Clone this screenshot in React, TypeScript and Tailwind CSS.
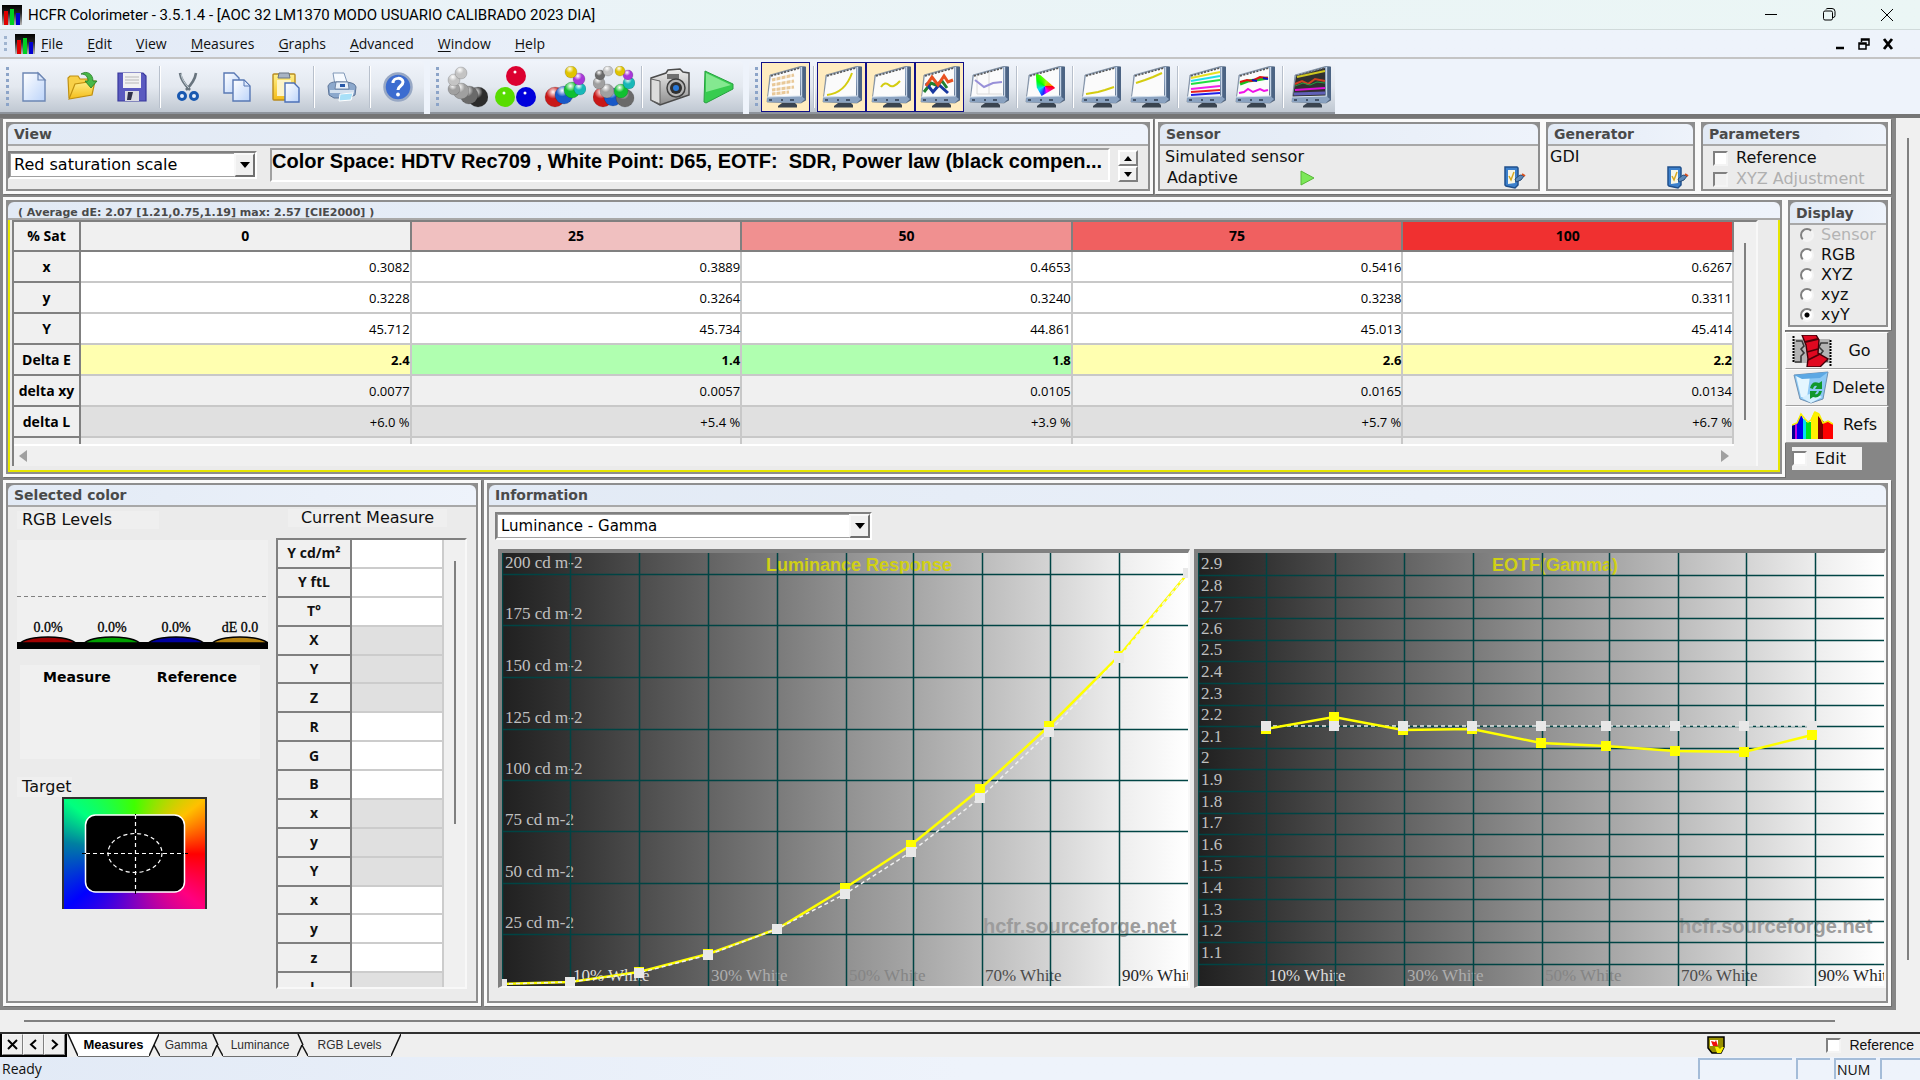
import type { ReactNode } from "react";

/* =========================================================
   DATA
========================================================== */

const MENUS = ["File", "Edit", "View", "Measures", "Graphs", "Advanced", "Window", "Help"];

const TABS = [
  { name: "Measures", width: "w-[71px]" },
  { name: "Gamma", width: "w-[52px]" },
  { name: "Luminance", width: "w-[74px]" },
  { name: "RGB Levels", width: "w-[83px]" },
];

const SATURATIONS = [
  { label: "0", bg: "bg-[#f0f0f0]" },
  { label: "25", bg: "bg-[#f0c0c0]" },
  { label: "50", bg: "bg-[#f09090]" },
  { label: "75", bg: "bg-[#f06060]" },
  { label: "100", bg: "bg-[#f03030]" },
];

const YELLOW = "bg-[#ffffb0] font-bold";
const GREEN = "bg-[#b0ffb0] font-bold";

const MEASURES: { label: string; values: string[]; bg: string[] }[] = [
  { label: "x", values: ["0.3082", "0.3889", "0.4653", "0.5416", "0.6267"], bg: [] },
  { label: "y", values: ["0.3228", "0.3264", "0.3240", "0.3238", "0.3311"], bg: [] },
  { label: "Y", values: ["45.712", "45.734", "44.861", "45.013", "45.414"], bg: [] },
  {
    label: "Delta E",
    values: ["2.4", "1.4", "1.8", "2.6", "2.2"],
    bg: [YELLOW, GREEN, GREEN, YELLOW, YELLOW],
  },
  {
    label: "delta xy",
    values: ["0.0077", "0.0057", "0.0105", "0.0165", "0.0134"],
    bg: Array(5).fill("bg-[#f0f0f0]"),
  },
  {
    label: "delta L",
    values: ["+6.0 %", "+5.4 %", "+3.9 %", "+5.7 %", "+6.7 %"],
    bg: Array(5).fill("bg-[#e0e0e0]"),
  },
];

const CURRENT_ROWS = [
  "Y cd/m²", "Y ftL", "T°", "X", "Y", "Z", "R", "G",
  "B", "x", "y", "Y", "x", "y", "z", "L",
];

const GRID_X = [0, 68, 137, 206, 275, 344, 411, 480, 548, 617, 686];

const WHITE_LABELS = [
  { x: 71, text: "10% White", fill: "#dcdcdc" },
  { x: 209, text: "30% White", fill: "#adadad" },
  { x: 347, text: "50% White", fill: "#858585" },
  { x: 483, text: "70% White", fill: "#4c4c4c" },
  { x: 620, text: "90% White", fill: "#262626" },
];

/* =========================================================
   PANELS
========================================================== */

function Panel({
  title,
  className = "",
  bodyClass = "",
  headClass = "h-[22px] text-[14px]",
  children,
}: {
  title: string;
  className?: string;
  bodyClass?: string;
  headClass?: string;
  children: ReactNode;
}) {
  return (
    <section className={`flex flex-col bg-[#fafafa] p-[3px] shadow-[1px_1px_0_#707070] ${className}`}>
      <div className="flex flex-1 flex-col border-2 border-[#8e8e8e] bg-[#8e8e8e]">
        <h2
          className={`flex shrink-0 items-center overflow-hidden whitespace-nowrap rounded-t-md border-b-2 border-[#a8a8a8] bg-linear-to-r from-[#e2eaf5] to-[#eef3fb] pl-1.5 font-bold text-[#4a4a4a] ${headClass}`}
        >
          {title}
        </h2>
        <div className={`flex-1 bg-[#ebebeb] ${bodyClass}`}>{children}</div>
      </div>
    </section>
  );
}

function Select({ value, label, className }: { value: string; label: string; className: string }) {
  return (
    <div className={`relative h-7 border-2 border-[#808080] border-r-white border-b-white ${className}`}>
      <select
        aria-label={label}
        className="h-full w-full appearance-none border border-[#a0a0a0] bg-white pl-[3px] leading-5 text-black outline-none"
      >
        <option>{value}</option>
      </select>
      <span className="pointer-events-none absolute inset-y-0 right-0 flex w-[21px] items-center justify-center border-2 border-[#f8f8f8] border-r-[#707070] border-b-[#707070] bg-[#f0f0f0]">
        <svg width="10" height="6" viewBox="0 0 10 6"><path d="M0 0h10L5 6z" /></svg>
      </span>
    </div>
  );
}

const CHECKBOX =
  "size-[15px] shrink-0 appearance-none border-2 border-[#808080] border-r-[#f4f4f4] border-b-[#f4f4f4] bg-white disabled:bg-[#f0f0f0]";

/* =========================================================
   ICONS
========================================================== */

function AppIcon({ size }: { size: number }) {
  return (
    <svg width={size} height={size} viewBox="0 0 20 20">
      <defs>
        <linearGradient id="app" x1="0" y1="0" x2="0" y2="1">
          <stop offset="0" stopColor="#000" />
          <stop offset="0.4" stopColor="#222" />
          <stop offset="1" stopColor="#bbb" />
        </linearGradient>
      </defs>
      <rect width="20" height="20" fill="url(#app)" />
      <rect x="2" y="6" width="4" height="14" fill="#e00000" />
      <rect x="8" y="4" width="4" height="16" fill="#00d020" />
      <rect x="14" y="8" width="4" height="12" fill="#0000d0" />
    </svg>
  );
}

function SharedDefs() {
  const balls: [string, string][] = [
    ["white", "#c4c4c4"], ["silver", "#a0a0a0"], ["gray", "#6a6a6a"], ["dark", "#2c2c2c"],
    ["red", "#c81818"], ["blue", "#1858c8"], ["green", "#10c030"], ["cyan", "#18b8b8"],
    ["violet", "#a838d8"], ["yellow", "#e0c400"],
  ];
  return (
    <svg width="0" height="0" className="absolute" aria-hidden="true">
      <defs>
        {balls.map(([id, color]) => (
          <radialGradient key={id} id={`b-${id}`} cx="0.4" cy="0.25" r="0.75">
            <stop offset="0" stopColor="#fff" />
            <stop offset="0.45" stopColor={color} />
            <stop offset="1" stopColor={color} />
          </radialGradient>
        ))}
        <linearGradient id="bezel" x1="0" y1="0" x2="1" y2="1">
          <stop offset="0" stopColor="#b8c8dc" />
          <stop offset="0.6" stopColor="#7890b0" />
          <stop offset="1" stopColor="#34465c" />
        </linearGradient>
        <linearGradient id="page" x1="0" y1="0" x2="1" y2="1">
          <stop offset="0" stopColor="#fff" />
          <stop offset="1" stopColor="#bcd4fa" />
        </linearGradient>
        <linearGradient id="folder" x1="0" y1="0" x2="0" y2="1">
          <stop offset="0" stopColor="#fff08a" />
          <stop offset="1" stopColor="#f4bc18" />
        </linearGradient>
        <linearGradient id="body" x1="0" y1="0" x2="0" y2="1">
          <stop offset="0" stopColor="#f0f0f0" />
          <stop offset="1" stopColor="#8c8c8c" />
        </linearGradient>
      </defs>
    </svg>
  );
}

function Balls({ items }: { items: [number, number, number, string][] }) {
  return (
    <svg width="42" height="42" viewBox="0 0 42 42">
      {items.map(([x, y, r, c], i) => (
        <circle key={i} cx={x} cy={y} r={r} fill={`url(#b-${c})`} stroke="#00000040" strokeWidth="0.6" />
      ))}
    </svg>
  );
}

function Monitor({ dark, children }: { dark?: boolean; children: ReactNode }) {
  return (
    <svg width="40" height="42" viewBox="0 0 40 42">
      <path d="M4 9 36 0l4 1v33l-5 3-34-1z" fill="url(#bezel)" stroke="#5c6c80" strokeWidth="0.6" />
      <path d="M5 10 34 2v28L2 31z" fill={dark ? "#303030" : "#fbfbfb"} />
      <path d="M5 10 34 2" stroke="#555" strokeWidth="1.6" strokeDasharray="2 1.4" fill="none" />
      <path d="M36 1 40 1v33l-4 1z" fill="#4c6484" />
      <path d="M35.500 1v31" stroke="#c8d6e8" strokeWidth="1.400" />
      <path d="M1 31 35 30l4 3-4 4-34-1z" fill="#8aa2c0" />
      <path d="M1 31 35 30" stroke="#d8e4f0" />
      <path d="M3 34h3M15 34h2M24 34h4" stroke="#2c3a4c" strokeWidth="1.6" />
      <path d="M16 37h13l2 2v2.500H12V40z" fill="#3a4450" />
      {children}
    </svg>
  );
}

const stroke = (color: string, d: string, width = 2) => (
  <path d={d} fill="none" stroke={color} strokeWidth={width} />
);

const FILE_ICONS: Record<string, ReactNode> = {
  New: (
    <svg width="26" height="32" viewBox="0 0 26 32">
      <path d="M2 2h15l7 7v21H2z" fill="url(#page)" stroke="#6c86b4" strokeWidth="1.4" />
      <path d="M17 2v7h7z" fill="#dce8fc" stroke="#6c86b4" strokeWidth="1.2" />
    </svg>
  ),
  Open: (
    <svg width="34" height="32" viewBox="0 0 34 32">
      <path d="M3 27 2 7l2-2h8l2 3h10v6" fill="#f8d048" stroke="#c09010" strokeWidth="1.2" />
      <path d="M3 28 9 13l20-3-3 14z" fill="url(#folder)" stroke="#c09010" strokeWidth="1.200" />
      <path d="M15 3c6-4 12 0 12 7h4l-6 7-6-7h3c0-4-2-7-7-7z" fill="#48b848" stroke="#207820" strokeWidth="0.8" />
    </svg>
  ),
  Save: (
    <svg width="30" height="30" viewBox="0 0 30 30">
      <path d="M1 1h25l3 3v25H1z" fill="#5a5ac0" stroke="#38389c" strokeWidth="1.2" />
      <rect x="6" y="1" width="18" height="15" fill="#f2f2f2" />
      <path d="M8 5h14M8 8h14M8 11h14" stroke="#b8b8b8" />
      <rect x="8" y="19" width="14" height="10" fill="#dcdce4" />
      <path d="M11 20h5l-2 8h-4z" fill="#30304c" />
    </svg>
  ),
  Cut: (
    <svg width="26" height="32" viewBox="0 0 26 32">
      <path d="M5 2c1 7 5 12 10 17M21 2c-1 7-5 12-10 17" fill="none" stroke="#68747e" strokeWidth="2.6" />
      <path d="M6 3c1 6 4 10 8 14" fill="none" stroke="#c4d0d8" />
      <circle cx="7" cy="25" r="3.500" fill="#e4eefc" stroke="#1858b0" strokeWidth="3" />
      <circle cx="19" cy="25" r="3.500" fill="#e4eefc" stroke="#1858b0" strokeWidth="3" />
    </svg>
  ),
  Copy: (
    <svg width="30" height="32" viewBox="0 0 30 32">
      <path d="M2 2h10l5 5v15H2z" fill="url(#page)" stroke="#5878b4" strokeWidth="1.400" />
      <path d="M11 9h11l6 6v15H11z" fill="url(#page)" stroke="#5878b4" strokeWidth="1.400" />
      <path d="M22 9v6h6z" fill="#dce8fc" stroke="#5878b4" />
    </svg>
  ),
  Paste: (
    <svg width="28" height="32" viewBox="0 0 28 32">
      <rect x="1" y="3" width="22" height="26" rx="1" fill="url(#folder)" stroke="#b88c20" strokeWidth="1.400" />
      <path d="M7 2h10l1 5H6z" fill="#a8b4c4" stroke="#687484" />
      <path d="M5 9h14v16H5z" fill="#fdf4c8" />
      <path d="M13 12h9l5 5v14H13z" fill="url(#page)" stroke="#4c70b8" strokeWidth="1.400" />
    </svg>
  ),
  Print: (
    <svg width="30" height="30" viewBox="0 0 30 30">
      <path d="M6 1h11l4 12H8z" fill="#f6faff" stroke="#8098b8" />
      <path d="M1 14c2-5 8-4 13-4s14 0 15 5l-1 8-6 3H7l-5-3z" fill="#8ca8cc" stroke="#5c7498" />
      <path d="M9 10h12l1 7H8z" fill="#e8f0fa" stroke="#5c7498" strokeWidth="0.8" />
      <path d="M13 12h5v3h-5z" fill="#2858a8" />
      <path d="M3 18h24v3H3z" fill="#d4e0ee" />
      <path d="m13 22 13-1-2 7-12 1z" fill="#a8e0f8" stroke="#fff" />
    </svg>
  ),
  Help: (
    <svg width="30" height="32" viewBox="0 0 30 32">
      <circle cx="15" cy="16" r="13.500" fill="#3c6cd0" stroke="#98a8c4" strokeWidth="2.500" />
      <path d="M10 12c0-6 10-6 10-1 0 4-5 4-5 8" fill="none" stroke="#fff" strokeWidth="3" />
      <circle cx="15" cy="23.500" r="1.900" fill="#fff" />
    </svg>
  ),
};

const MEASURE_ICONS: Record<string, ReactNode> = {
  Grayscale: (
    <Balls
      items={[
        [32, 31, 10, "dark"], [23, 29, 9, "gray"], [15, 25, 8, "silver"], [8, 23, 6, "silver"],
        [8, 14, 6, "white"], [15, 7, 6, "white"],
      ]}
    />
  ),
  Primaries: (
    <svg width="42" height="42" viewBox="0 0 42 42">
      <circle cx="21" cy="10" r="10" fill="#dc0030" />
      <circle cx="10" cy="31" r="10" fill="#58dc00" />
      <circle cx="31" cy="31" r="10" fill="#0000dc" />
      <circle cx="20" cy="6" r="1.500" fill="#fff" />
      <circle cx="9" cy="27" r="1.500" fill="#fff" />
      <circle cx="30" cy="27" r="1.500" fill="#fff" />
    </svg>
  ),
  Secondaries: (
    <Balls
      items={[
        [11, 31, 10, "red"], [20, 29, 9, "blue"], [28, 24, 8, "green"], [36, 23, 6, "cyan"],
        [35, 13, 6, "violet"], [27, 6, 6, "yellow"],
      ]}
    />
  ),
  "Full scale": (
    <Balls
      items={[
        [10, 31, 10, "red"], [20, 31, 9, "blue"], [32, 32, 9, "gray"], [14, 25, 7, "silver"],
        [28, 25, 7, "green"], [6, 17, 6, "silver"], [36, 17, 6, "cyan"], [7, 9, 5, "gray"],
        [35, 9, 5, "violet"], [15, 5, 5, "white"], [27, 5, 5, "yellow"],
      ]}
    />
  ),
  Camera: (
    <svg width="42" height="38" viewBox="0 0 42 38">
      <path d="M2 10 17 5l2-3 12-1 3 3 6 1v22l-6 2-23 8-9-5z" fill="url(#body)" stroke="#4c4c4c" strokeWidth="1.500" />
      <path d="M2 11 11 13v23l-9-4z" fill="#dcdcdc" stroke="#606060" />
      <path d="M18 6h12v5H18z" fill="#707070" />
      <circle cx="27" cy="20" r="9" fill="#b4b4b4" stroke="#404040" strokeWidth="1.500" />
      <circle cx="27" cy="20" r="6" fill="#303030" />
      <circle cx="27" cy="20" r="3" fill="#2878d8" />
    </svg>
  ),
  Start: (
    <svg width="32" height="34" viewBox="0 0 32 34">
      <path d="M2 1 30 14v5L3 33 1 32z" fill="#38cc50" stroke="#28a040" />
      <path d="M3 3 28 15 3 22z" fill="#84e890" />
    </svg>
  ),
};

const VIEW_GROUPS: { on?: boolean; name: string; icon: ReactNode }[][] = [
  [
    {
      on: true,
      name: "Measures",
      icon: (
        <Monitor>
          {stroke("#e8c898", "m6 14 22-5M6 19l22-4M6 24l22-3M6 28l17-2", 3)}
          {stroke("#fff", "M10 11v18M15 10v18M20 8v20M25 7v20", 1)}
        </Monitor>
      ),
    },
  ],
  [
    { on: true, name: "Luminance", icon: <Monitor>{stroke("#d4cc10", "M5 29q18-2 25-22")}</Monitor> },
    { on: true, name: "Gamma", icon: <Monitor>{stroke("#d4cc10", "M10 21q4-6 8-2t11-4")}</Monitor> },
    {
      on: true,
      name: "RGB levels",
      icon: (
        <Monitor>
          {stroke("#208030", "m4 26 7-9 5 2 6-4 5 7", 3)}
          {stroke("#1838a0", "m6 17 7 9 6-7 9 8", 3)}
          {stroke("#e85020", "m6 20 6-9 6 8 6-9 4 6 5-2", 3)}
        </Monitor>
      ),
    },
    {
      name: "Color temperature",
      icon: (
        <Monitor>
          {stroke("#d8d8d8", "M8 10v18h25M20 6v22", 1)}
          {stroke("#9890d8", "m6 14 9 7 9-4 9-1")}
        </Monitor>
      ),
    },
  ],
  [
    {
      name: "CIE diagram",
      icon: (
        <Monitor>
          <foreignObject x="10" y="7" width="22" height="24">
            <div className="h-full w-full bg-[conic-gradient(from_90deg_at_45%_55%,#ff0000,#ff00ff_20%,#2020ff_28%,#00e0ff_42%,#00ff00_60%,#a0ff00_80%,#ff8000)] [clip-path:polygon(4%_4%,24%_8%,92%_62%,30%_96%,8%_60%)]" />
          </foreignObject>
        </Monitor>
      ),
    },
  ],
  [
    { name: "Near black", icon: <Monitor>{stroke("#d4cc10", "m5 28 12-2 7-2 9-3")}</Monitor> },
    { name: "Near white", icon: <Monitor>{stroke("#d4cc10", "m6 17 9-3 8-3 9-4")}</Monitor> },
  ],
  [
    {
      name: "Saturation",
      icon: (
        <Monitor>
          {stroke("#e8e020", "m5 12 29-6")}
          {stroke("#20e0e8", "m5 15 29-5")}
          {stroke("#20e040", "m5 18 29-4")}
          {stroke("#f020e8", "m5 23 29-3")}
          {stroke("#e82020", "m5 26 29-2")}
          {stroke("#2020e8", "m5 29 29-2")}
        </Monitor>
      ),
    },
    {
      name: "Combined",
      icon: (
        <Monitor>
          {stroke("#18c020", "m5 18 8-3 8-1 12-2", 3)}
          {stroke("#e01010", "m5 16 7-2 5 1 8-4 8 1")}
          {stroke("#1010c0", "M17 14l5 1M28 12l5 1")}
          {stroke("#f010e8", "m4 27 5-1 4-3 5 3 7-3 4 2 4-1")}
        </Monitor>
      ),
    },
  ],
  [
    {
      name: "Overview",
      icon: (
        <Monitor dark>
          {stroke("#d0c820", "m6 11 28-6")}
          {stroke("#d04020", "m4 18 7-3 6 3 7-5 10 2")}
          {stroke("#20a040", "m4 20 8-3 7 2 7-3 8 1", 1)}
          {stroke("#e010d8", "m4 24 30-2")}
          {stroke("#6060b8", "m3 28 31-1", 3)}
        </Monitor>
      ),
    },
  ],
];

function ToolButton({ name, on, children }: { name: string; on?: boolean; children: ReactNode }) {
  return (
    <button
      type="button"
      aria-label={name}
      className={`flex h-[50px] w-[49px] items-center justify-center ${on ? "border border-[#101088] bg-[#ffecc0]" : ""}`}
    >
      {children}
    </button>
  );
}

const Separator = () => (
  <span className="flex h-[42px] w-[7px] justify-center">
    <i className="w-0.5 border-l border-[#b8c0cc] bg-white" />
  </span>
);

const TOOLBAR =
  "flex h-[53px] items-center rounded-t border-b-2 border-[#8e949c] bg-linear-to-b from-[#f0f4fb] via-[#e4e9f0] via-50% to-[#c0c8d2]";

const Grip = () => (
  <span className="mr-[3px] ml-1.5 h-10 w-[3px] bg-[repeating-linear-gradient(#8ca4c8_0_3px,transparent_3px_6px)]" />
);

function SheetIcon() {
  return (
    <svg width="24" height="24" viewBox="0 0 24 24">
      <path d="M3 2h12l1 1v17l-3 3-9-2-1-1z" fill="#3c80cc" stroke="#20508c" strokeWidth="1.500" />
      <path d="M6 5h7v13l-7 1z" fill="#f6f6e8" />
      <path d="m7 11 2 4 3-8" fill="none" stroke="#d8a820" strokeWidth="1.500" />
      <path d="m13 14 5-4 4 1-3 4-5 2z" fill="#5c88b8" stroke="#284c78" />
      <path d="m20 9 3 2" stroke="#d85020" strokeWidth="2" />
    </svg>
  );
}

/* =========================================================
   CHARTS
========================================================== */

function ChartFrame({
  id,
  title,
  titleX,
  gridY,
  labels,
  children,
}: {
  id: string;
  title: string;
  titleX: number;
  gridY: number[];
  labels: string[];
  children: ReactNode;
}) {
  const stops = ["#202020", "#343434", "#4c4c4c", "#636363", "#7a7a7a", "#919191", "#a6a6a6", "#bcbcbc", "#d4d4d4", "#ededed", "#ffffff"];
  return (
    <div className="min-w-0 flex-1 border-t-4 border-r-2 border-b-2 border-l-4 border-[#808080] border-r-[#f8f8f8] border-b-[#f8f8f8]">
      <svg viewBox="0 0 686 433" className="block w-full" role="img" aria-label={title}>
        <defs>
          <linearGradient id={id}>
            {stops.map((c, i) => (
              <stop key={c} offset={i / 10} stopColor={c} />
            ))}
          </linearGradient>
        </defs>
        <rect width="686" height="433" fill={`url(#${id})`} />

        <g fontFamily="'Liberation Sans', Arial, sans-serif" fontWeight="bold">
          <text x="481" y="380" fontSize="20" fill="#9c9c9c">hcfr.sourceforge.net</text>
          <text x={titleX} y="18" fontSize="18" fill="#d0d014">{title}</text>
        </g>

        <g fontFamily="'Liberation Serif', 'Times New Roman', serif" fontSize="17">
          {labels.map((text, i) => (
            <text key={text} x="3" y={gridY[i] - 6} fill="#c0c0c0">{text}</text>
          ))}
          {WHITE_LABELS.map((l) => (
            <text key={l.text} x={l.x} y="428" fill={l.fill}>{l.text}</text>
          ))}
        </g>

        <g stroke="#004444" strokeWidth="1.500">
          {GRID_X.slice(0, 10).map((x) => (
            <path key={x} d={`M${x + 0.5} 0V433`} />
          ))}
          {gridY.map((y) => (
            <path key={y} d={`M0 ${y + 0.5}H686`} />
          ))}
        </g>

        {children}
      </svg>
    </div>
  );
}

function Series({ points, color, line }: { points: number[][]; color: string; line: ReactNode }) {
  return (
    <>
      {line}
      {points.map(([x, y]) => (
        <rect key={x} x={x - 5} y={y - 5} width="10" height="10" fill={color} />
      ))}
    </>
  );
}

const toPath = (points: number[][]) => points.map((p) => p.join(",")).join(" ");

const LUM = [[0, 431], [68, 429], [137, 419], [206, 401], [275, 376], [343, 335], [409, 292], [478, 236], [547, 173], [617, 103], [686, 20]];
const LUM_REF = [[0, 431], [68, 429], [137, 420], [206, 402], [275, 376], [343, 341], [409, 299], [478, 245], [547, 179], [617, 105], [686, 20]];
const GAM = [[68, 176], [136, 164], [205, 177], [274, 176], [343, 190], [408, 193], [477, 198], [546, 199], [614, 182]];
const GAM_REF = [[68, 173], [136, 173], [205, 173], [274, 173], [343, 173], [408, 173], [477, 173], [546, 173], [614, 173]];

function Line({ points }: { points: number[][] }) {
  return <polyline points={toPath(points)} fill="none" stroke="#ffff00" strokeWidth="2.500" />;
}

function RefLine({ points }: { points: number[][] }) {
  return <polyline points={toPath(points)} fill="none" stroke="#f0f0f0" strokeWidth="1.500" strokeDasharray="4 3" />;
}

/* =========================================================
   SELECTED COLOR
========================================================== */

function RgbLevels() {
  const bars = [
    { x: 31, fill: "#a00000", text: "0.0%" },
    { x: 95, fill: "#00a000", text: "0.0%" },
    { x: 159, fill: "#0000a0", text: "0.0%" },
    { x: 223, fill: "#b88410", text: "dE 0.0" },
  ];
  return (
    <svg width="251" height="109" viewBox="0 0 251 109" className="mt-[11px] block bg-[#f0f0f0]">
      <path d="M0 56.500h251" stroke="#808080" strokeDasharray="4 3" />
      <rect y="102" width="251" height="7" />
      {bars.map((b) => (
        <g key={b.x}>
          <path d={`M${b.x - 28} 103q6-4 14-5q14-2 28 0q8 1 14 5z`} fill={b.fill} stroke="#000" strokeWidth="1.500" />
          <text x={b.x} y="92" textAnchor="middle" fontFamily="'Liberation Serif', serif" fontSize="14" stroke="#000" strokeWidth="0.3">
            {b.text}
          </text>
        </g>
      ))}
    </svg>
  );
}

function Target() {
  return (
    <div className="ml-[45px] h-[112px] w-[145px] border-2 border-b-0 border-[#303030] bg-[conic-gradient(#40ff00,#ffc000_52deg,#ff0000_90deg,#ff0080_128deg,#8000c0_180deg,#0000ff_232deg,#0080a0_280deg,#00ff80_308deg,#40ff00)]">
      <svg viewBox="0 0 141 110" className="block w-full">
        <rect x="21.500" y="16" width="99" height="77" rx="10" fill="#000" stroke="#fff" strokeWidth="1.500" />
        <path d="M18 54.500h106M71.500 15v80" stroke="#000" />
        <g fill="none" stroke="#fff" strokeWidth="1.200" strokeDasharray="4 3">
          <path d="M22 54.500h99M71.500 16v77" />
          <ellipse cx="71" cy="54" rx="27" ry="19.500" />
        </g>
      </svg>
    </div>
  );
}

function CurrentMeasure() {
  return (
    <div className="flex flex-col">
      <h3 className="ml-3 w-[159px] bg-[#efefef] text-center leading-[18px]">Current Measure</h3>
      <div className="mt-[11px] flex h-[451px] w-[191px] overflow-hidden border-2 border-[#808080] border-r-[#f8f8f8] border-b-[#f8f8f8] bg-[#f0f0f0]">
        <table className="h-[462px] w-[166px] table-fixed border-separate border-spacing-0 font-['Open_Sans',sans-serif] text-[14px]">
          <tbody>
            {CURRENT_ROWS.map((row, i) => (
              <tr key={i}>
                <th className="w-[74px] border-r-2 border-b-2 border-[#808080] bg-[#f0f0f0] p-0 leading-5">{row}</th>
                <td
                  className={`border-r-2 border-b-2 border-[#cccccc] p-0 ${Math.floor(i / 3) % 2 ? "bg-[#e0e0e0]" : "bg-white"}`}
                />
              </tr>
            ))}
          </tbody>
        </table>
        <div className="mt-[21px] ml-2.5 h-[263px] w-0.5 bg-[#808080]" />
      </div>
    </div>
  );
}

/* =========================================================
   ACTIONS
========================================================== */

const ACTIONS: { name: string; icon: ReactNode }[] = [
  {
    name: "Go",
    icon: (
      <svg width="40" height="32" viewBox="0 0 40 32">
        <path d="M2 4h36v24H2z" fill="#b4b4b4" />
        <path d="M1.500 1v27M38.500 5v27" stroke="#000" strokeWidth="2" strokeDasharray="2 1" />
        <path d="M4 6h6l2 5-3 3 3 4-3 3v6H3M36 8h-7l-2 4 4 4-3 4 4 6h4" fill="none" stroke="#383838" strokeWidth="1.600" />
        <path d="M10 0h14l3 5-1 13 10 6-8 8H15l1-8-2-14z" fill="#e00820" stroke="#400008" strokeWidth="1.400" />
        <path d="m13 7 13-3M15 17l11-3M16 25l12-6" stroke="#500008" strokeWidth="1.800" />
      </svg>
    ),
  },
  {
    name: "Delete",
    icon: (
      <svg width="38" height="33" viewBox="0 0 38 33">
        <path d="M2 4 36 1l-5 27-12 4-11-4z" fill="#8cc8f4" stroke="#7090b0" />
        <path d="M4 5h14l-3 22-6-1z" fill="#e4f6ff" />
        <path d="M2 4 36 1l-8 6-18 1z" fill="#5ca8e4" />
        <path d="M10 27q10-8 20-1l-11 6z" fill="#d4f0ff" />
        <path d="M18 17q2-8 9-5l3-2v8h-7l2-3q-3-1-4 3zM30 20q-2 8-9 6l-3 2v-8h7l-2 3q3 1 4-3z" fill="#10982c" />
      </svg>
    ),
  },
  {
    name: "Refs",
    icon: (
      <svg width="41" height="28" viewBox="0 0 41 28">
        <path d="M0 14h3v14H0z" fill="#000090" />
        <path d="M3 12h3v16H3z" fill="#c000e0" />
        <path d="M5 11 9 3l3 7v18H5z" fill="#0000f0" />
        <path d="M11 8h3v20h-3z" fill="#00e0f0" />
        <path d="M14 11h6v17h-6z" fill="#00e020" />
        <path d="m19 8 3-7 5 1v26h-8z" fill="#fff000" />
        <path d="m26 5 6 6v17h-6z" fill="#780000" />
        <path d="m31 12 6-2 4 3v15H31z" fill="#ff0000" />
        <path d="m0 14 5-2 4-9 4 5 3 3 3-2 4-8 4 2 4 9 5-2 5 3" fill="none" stroke="#f8f000" strokeWidth="1.500" />
      </svg>
    ),
  },
];

/* =========================================================
   WINDOW
========================================================== */

export default function App() {
  return (
    <div className="flex min-h-screen flex-col bg-[#efefef] font-['DejaVu_Sans',sans-serif] text-[16px] leading-5 text-[#101010]">
      <SharedDefs />

      {/* Title bar */}
      <header className="flex h-[30px] items-center border-b border-[#d0dada] bg-linear-to-r from-[#eaf2f8] to-[#ebf6f5] pl-0.5 text-black">
        <AppIcon size={20} />
        <h1 className="flex-1 pl-1.5 font-[Roboto,sans-serif] text-[15px]">
          HCFR Colorimeter - 3.5.1.4 - [AOC 32 LM1370 MODO USUARIO CALIBRADO 2023 DIA]
        </h1>
        <div className="flex items-center">
          <button type="button" aria-label="Minimize" className="flex h-7 w-[58px] items-center justify-center">
            <svg width="12" height="12" viewBox="0 0 12 12"><path d="M0 5.500h12" stroke="#000" /></svg>
          </button>
          <button type="button" aria-label="Restore" className="flex h-7 w-[58px] items-center justify-center">
            <svg width="13" height="13" viewBox="0 0 13 13" fill="none" stroke="#000">
              <rect x="0.500" y="3" width="9" height="9" rx="1.500" />
              <path d="M3 1.500Q3 .5 5 .5h4q3 0 3 3v4q0 2-2 2" />
            </svg>
          </button>
          <button type="button" aria-label="Close" className="mr-1 flex h-7 w-[58px] items-center justify-center">
            <svg width="12" height="12" viewBox="0 0 12 12"><path d="m0 0 12 12M12 0 0 12" stroke="#000" /></svg>
          </button>
        </div>
      </header>

      {/* Menu bar */}
      <nav className="flex h-[29px] items-center border-b-2 border-[#c4c4c4] bg-linear-to-r from-[#e2eaf6] to-[#eef3fb] to-50% pl-1 font-['Open_Sans',sans-serif] text-[14px]">
        <span className="mr-2 h-4 w-[3px] bg-[repeating-linear-gradient(#a0b4d0_0_3px,transparent_3px_6px)]" />
        <AppIcon size={20} />
        <div className="flex flex-1 gap-6 pl-1.5">
          {MENUS.map((m) => (
            <button key={m} type="button">
              <u className="underline-offset-2">{m[0]}</u>
              {m.slice(1)}
            </button>
          ))}
        </div>
        <div className="flex gap-3 pr-[26px]">
          <button type="button" aria-label="Minimize document">
            <svg width="12" height="12" viewBox="0 0 12 12"><path d="M2 10h8" stroke="#000" strokeWidth="2.500" /></svg>
          </button>
          <button type="button" aria-label="Restore document">
            <svg width="12" height="12" viewBox="0 0 12 12" fill="none" stroke="#000" strokeWidth="1.500">
              <path d="M3.500 4V1H11v6H8M1 5h7v6H1zM1 6h7M4 2h7" />
            </svg>
          </button>
          <button type="button" aria-label="Close document">
            <svg width="12" height="12" viewBox="0 0 12 12"><path d="m2 1 8 10M10 1 2 11" stroke="#000" strokeWidth="2.800" /></svg>
          </button>
        </div>
      </nav>

      {/* Toolbars */}
      <div className="flex gap-1.5 bg-[#eef3fb] pt-0.5">
        <div className={`pr-0.5 ${TOOLBAR}`}>
          <span className="ml-1.5 h-10 w-[3px] bg-[repeating-linear-gradient(#8ca4c8_0_3px,transparent_3px_6px)]" />
          {Object.entries(FILE_ICONS).map(([name, icon]) => (
            <div key={name} className="flex items-center">
              {(name === "Cut" || name === "Print" || name === "Help") && <Separator />}
              <ToolButton name={name}>{icon}</ToolButton>
            </div>
          ))}
        </div>
        <div className={TOOLBAR}>
          <Grip />
          {Object.entries(MEASURE_ICONS).map(([name, icon]) => (
            <div key={name} className="flex items-center">
              {name === "Camera" && <Separator />}
              <ToolButton name={name}>{icon}</ToolButton>
            </div>
          ))}
        </div>
        <div className={TOOLBAR}>
          <Grip />
          {VIEW_GROUPS.map((group, i) => (
            <div key={i} className="flex items-center">
              {i > 0 && <Separator />}
              {group.map((b) => (
                <ToolButton key={b.name} name={b.name} on={b.on}>{b.icon}</ToolButton>
              ))}
            </div>
          ))}
        </div>
      </div>

      {/* Document area */}
      <div className="flex flex-1 border-t-4 border-[#757575]">
        <main className="flex min-w-0 flex-1 flex-col gap-[3px] bg-[#868686] pt-px pr-[5px] pb-1 pl-[3px]">
          <div className="flex">
            <Panel title="View" className="mr-0.5 min-w-0 flex-1" bodyClass="flex h-[46px] pt-0.5">
              <Select value="Red saturation scale" label="Measure type" className="mt-[3px] w-[249px]" />
              <p className="mr-2 ml-[13px] h-[34px] min-w-0 flex-1 truncate border-2 border-[#a0a0a0] border-r-white border-b-white bg-[#f0f0f0] font-['Liberation_Sans',Arial,sans-serif] text-[20px] leading-[22px] font-bold whitespace-pre text-black">
                Color Space: HDTV Rec709 , White Point: D65, EOTF:  SDR, Power law (black compen...
              </p>
              <div className="mt-0.5 mr-2.5 flex w-5 flex-col">
                {["Previous", "Next"].map((n) => (
                  <button
                    key={n}
                    type="button"
                    aria-label={n}
                    className="flex h-4 items-center justify-center border-2 border-white border-r-[#808080] border-b-[#808080] bg-[#f0f0f0]"
                  >
                    <svg width="8" height="5" viewBox="0 0 8 5"><path d={n === "Next" ? "M0 0h8L4 5z" : "M0 5h8L4 0z"} /></svg>
                  </button>
                ))}
              </div>
            </Panel>

            <Panel title="Sensor" className="w-[388px]" bodyClass="flex justify-between pl-[5px]">
              <div className="pt-px">
                <p className="pr-2">Simulated sensor</p>
                <p className="flex items-center leading-[22px]">
                  <span className="w-[135px] pl-0.5">Adaptive</span>
                  <svg width="15" height="16" viewBox="0 0 15 16"><path d="M1 1v14l13-7z" fill="#7ce858" stroke="#58b838" /></svg>
                </p>
              </div>
              <button type="button" aria-label="Configure sensor" className="mr-3 self-end"><SheetIcon /></button>
            </Panel>

            <Panel title="Generator" className="w-[155px]" bodyClass="flex justify-between pl-0.5">
              <p className="pt-px">GDI</p>
              <button type="button" aria-label="Configure generator" className="mr-1 self-end"><SheetIcon /></button>
            </Panel>

            <Panel title="Parameters" className="w-[193px]" bodyClass="flex flex-col gap-px pt-0.5 pl-2.5">
              <label className="flex items-center gap-2">
                <input type="checkbox" className={CHECKBOX} />
                Reference
              </label>
              <label className="flex items-center gap-2 text-[#b0b0b0]">
                <input type="checkbox" disabled className={CHECKBOX} />
                XYZ Adjustment
              </label>
            </Panel>
          </div>

          {/* Measures grid */}
          <div className="flex">
            <Panel
              title="( Average dE: 2.07 [1.21,0.75,1.19] max: 2.57 [CIE2000] )"
              className="min-w-0 flex-1"
              headClass="h-[18px] border-b-0 pl-[10px] pt-1.5 text-[11px]"
              bodyClass="flex border-2 border-t-0 border-[#e6e600] pr-5 pb-1 pl-0.5"
            >
              <div className="flex min-w-0 flex-1 border-t-2 border-r-2 border-l-2 border-[#808080] border-r-[#f8f8f8] bg-[#f0f0f0]">
                <div className="min-w-0 flex-1">
                  <div className="h-[222px] overflow-hidden">
                    <table className="w-full table-fixed border-separate border-spacing-0 font-['Open_Sans',sans-serif] text-[13px] text-black">
                      <thead>
                        <tr className="h-[30px]">
                          <th className="w-[67px] border-r-2 border-b-2 border-[#808080] p-0 text-[14px]">% Sat</th>
                          {SATURATIONS.map((s) => (
                            <th key={s.label} className={`border-r-2 border-b-2 border-[#808080] p-0 text-[14px] ${s.bg}`}>{s.label}</th>
                          ))}
                        </tr>
                      </thead>
                      <tbody>
                        {MEASURES.map((row) => (
                          <tr key={row.label} className="h-[31px]">
                            <th className="border-r-2 border-b-2 border-[#808080] p-0 text-[14px]">{row.label}</th>
                            {row.values.map((v, i) => (
                              <td
                                key={i}
                                className={`border-r-2 border-b-2 border-[#c8c8c8] p-0 text-right ${row.bg[i] ?? "bg-white"}`}
                              >
                                {v}
                              </td>
                            ))}
                          </tr>
                        ))}
                        <tr className="h-[31px]">
                          <th className="border-r-2 border-[#808080]" />
                          {SATURATIONS.map((s) => (
                            <td key={s.label} className="border-r-2 border-[#c8c8c8]" />
                          ))}
                        </tr>
                      </tbody>
                    </table>
                  </div>
                  <div className="flex h-[22px] items-center justify-between border-t-2 border-white px-[5px]">
                    <svg width="8" height="12" viewBox="0 0 8 12"><path d="M8 0v12L0 6z" fill="#a0a0a0" /></svg>
                    <svg width="8" height="12" viewBox="0 0 8 12"><path d="M0 0v12l8-6z" fill="#a0a0a0" /></svg>
                  </div>
                </div>
                <div className="mt-[21px] mr-2.5 ml-2.5 h-[177px] w-0.5 bg-[#808080]" />
              </div>
            </Panel>

            <aside className="flex w-[106px] flex-col">
              <Panel title="Display" headClass="h-[23px] text-[14px]" bodyClass="flex h-[99px] flex-col pl-2.5">
                {["Sensor", "RGB", "XYZ", "xyz", "xyY"].map((name) => (
                  <label key={name} className={`flex items-center gap-[7px] leading-5 ${name === "Sensor" ? "text-[#b4b4b4]" : ""}`}>
                    <input
                      type="radio"
                      name="display"
                      disabled={name === "Sensor"}
                      defaultChecked={name === "xyY"}
                      className="size-[14px] shrink-0 appearance-none rounded-full border-2 border-[#808080] border-r-[#f4f4f4] border-b-[#f4f4f4] bg-white checked:bg-[radial-gradient(#000_0_2px,#fff_3px)] disabled:bg-[#f0f0f0]"
                    />
                    {name}
                  </label>
                ))}
              </Panel>
              <div className="mt-0.5 mr-0.5 flex flex-col">
                {ACTIONS.map((a) => (
                  <button
                    key={a.name}
                    type="button"
                    className="flex h-[37px] items-center border border-r-2 border-white border-r-[#808080] border-b-[#a0a0a0] bg-[#efefef] pl-1.5"
                  >
                    {a.icon}
                    <span className="flex-1 text-center">{a.name}</span>
                  </button>
                ))}
              </div>
              <label className="mt-1 ml-[7px] flex h-[23px] w-[70px] items-center gap-2 bg-[#f0f0f0]">
                <input type="checkbox" className={CHECKBOX} />
                Edit
              </label>
            </aside>
          </div>

          {/* Lower panels */}
          <div className="flex flex-1 gap-[3px]">
            <Panel title="Selected color" className="w-[478px] shrink-0" bodyClass="flex justify-between pt-0.5 pr-[9px] pl-[9px]">
              <div className="w-[251px]">
                <h3 className="mt-0.5 w-[142px] bg-[#efefef] pl-[5px] leading-[18px]">RGB Levels</h3>
                <RgbLevels />
                <div className="mt-4 ml-[3px] flex h-[94px] w-[240px] justify-around bg-[#f0f0f0] text-[14px] leading-6 font-bold text-black">
                  <span>Measure</span>
                  <span>Reference</span>
                </div>
                <h3 className="mt-[18px] w-max bg-[#efefef] pl-[5px]">Target</h3>
                <Target />
              </div>
              <CurrentMeasure />
            </Panel>

            <Panel title="Information" className="min-w-0 flex-1" bodyClass="pt-[5px] pb-[7px]">
              <Select value="Luminance - Gamma" label="Information shown" className="ml-[6px] w-[377px] text-[15px]" />
              <div className="mt-[9px] flex gap-1 pl-[9px]">
                <ChartFrame
                  id="lum"
                  title="Luminance Response"
                  titleX={264}
                  gridY={[21, 72, 124, 176, 227, 278, 330, 381]}
                  labels={["200", "175", "150", "125", "100", "75", "50", "25"].map((v) => `${v} cd m-2`)}
                >
                  <Series points={LUM} color="#ffff00" line={<Line points={LUM} />} />
                  <Series points={LUM_REF} color="#e8e8e8" line={<RefLine points={LUM_REF} />} />
                </ChartFrame>
                <ChartFrame
                  id="eotf"
                  title="EOTF(Gamma)"
                  titleX={294}
                  gridY={Array.from({ length: 19 }, (_, i) => Math.round(22 + i * 21.6))}
                  labels={Array.from({ length: 19 }, (_, i) => String((29 - i) / 10))}
                >
                  <Series points={GAM_REF} color="#e8e8e8" line={<RefLine points={GAM_REF} />} />
                  <Series points={GAM} color="#ffff00" line={<Line points={GAM} />} />
                  {GAM_REF.slice(0, 4).map(([x, y]) => (
                    <rect key={x} x={x - 5} y={y - 5} width="10" height="10" fill="#e8e8e8" />
                  ))}
                </ChartFrame>
              </div>
            </Panel>
          </div>
        </main>
        <div className="flex w-6 justify-center bg-[#f0f0f0] pt-5 pb-[50px]">
          <div className="w-0.5 bg-[#808080]" />
        </div>
      </div>

      <div className="h-6 border-b-2 border-[#303030] pt-2.5 pr-[85px] pl-6">
        <div className="h-0.5 bg-[#808080]" />
      </div>

      {/* Sheet tabs */}
      <div className="flex h-[23px] items-start font-['Liberation_Sans',Arial,sans-serif] text-[12px]">
        <div className="flex h-[23px] border-r-2 border-b-2 border-l-2 border-black">
          {["M1 1l9 9M10 1l-9 9", "M8 1 3 5.500 8 10", "M3 1l5 4.500L3 10"].map((d, i) => (
            <button
              key={d}
              type="button"
              aria-label={["Close tab", "Previous tab", "Next tab"][i]}
              className="flex w-[21px] items-center justify-center border border-[#f8f8f8] border-r-[#808080] border-b-[#808080]"
            >
              <svg width="11" height="11" viewBox="0 0 11 11"><path d={d} fill="none" stroke="#000" strokeWidth="2" /></svg>
            </button>
          ))}
        </div>
        {TABS.map((t, i) => (
          <div key={t.name} className={`flex h-[23px] ${i > 0 ? "-ml-[10px]" : ""}`}>
            <svg width="11" height="23" viewBox="0 0 11 23" className="shrink-0">
              {i === 0 && <path d="M1 0 11 22V0z" fill="#fff" />}
              <path d={i === 0 ? "m1 0 10 22" : "m5 11 6 11"} stroke="#101010" strokeWidth="1.500" />
              {i > 1 && <path d="m1 0 5 11" stroke="#101010" strokeWidth="1.500" />}
            </svg>
            <button
              type="button"
              className={`border-b border-[#707070] ${t.width} ${i === 0 ? "bg-white text-[13px] font-bold text-black" : "text-[#303030]"}`}
            >
              {t.name}
            </button>
            <svg width="10" height="23" viewBox="0 0 10 23" className="shrink-0">
              {i === 0 && <path d="M0 22 10 0H0z" fill="#fff" />}
              <path d={i === 0 || i === 3 ? "M0 22 10 0" : "M0 22 5 11"} stroke="#101010" strokeWidth="1.500" />
            </svg>
          </div>
        ))}
        <div className="flex flex-1 items-center justify-end pt-px text-[14px]">
          <svg width="18" height="18" viewBox="0 0 18 18" className="mr-[101px]">
            <path d="M1 1h16v10l-3 6H5L1 12z" fill="#989000" stroke="#000" strokeWidth="1.500" />
            <path d="M3 4h8v6H3z" fill="#fff" />
            <path d="m4 5 4 1 1-2 2 6H6z" fill="#f01010" />
            <path d="M8 11h3l2 2 2-2h2l-3 6h-4z" fill="#f8f000" />
          </svg>
          <label className="flex items-center gap-2 pr-1.5">
            <input type="checkbox" className={CHECKBOX} />
            Reference
          </label>
        </div>
      </div>

      {/* Status bar */}
      <footer className="flex h-[23px] items-center justify-between bg-linear-to-r from-[#e2eaf6] to-[#eef3fb] to-50% pl-0.5 font-['Open_Sans',sans-serif] text-[14px]">
        <span>Ready</span>
        <div className="flex h-[21px] gap-1">
          <span className="w-[94px] border-t-2 border-l-2 border-[#a4bcd8]" />
          <span className="w-[34px] border-t-2 border-l-2 border-[#a4bcd8]" />
          <span className="w-[42px] border-t-2 border-l-2 border-[#a4bcd8] pl-px">NUM</span>
          <span className="w-10 border-t-2 border-l-2 border-[#a4bcd8]" />
        </div>
      </footer>
    </div>
  );
}
